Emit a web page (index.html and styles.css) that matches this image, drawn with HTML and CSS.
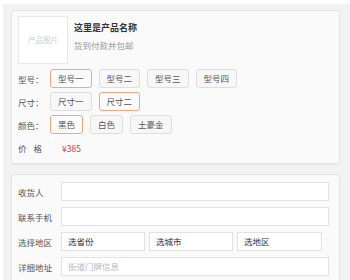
FILE: index.html
```html
<!DOCTYPE html>
<html lang="zh">
<head>
    <meta charset="UTF-8">
    <meta name="viewport" content="width=device-width, initial-scale=1.0">
    <title>商品下单</title>
    <link rel="stylesheet" href="styles.css">
</head>
<body>
    <div class="page">
        <div class="card product">
            <div class="goods">
                <div class="goods-pic">产品图片</div>
                <div class="goods-info">
                    <div class="goods-name">这里是产品名称</div>
                    <div class="goods-desc">货到付款并包邮</div>
                </div>
            </div>

            <div class="spec">
                <span class="spec-label">型号：</span>
                <span class="opt active">型号一</span>
                <span class="opt">型号二</span>
                <span class="opt">型号三</span>
                <span class="opt">型号四</span>
            </div>
            <div class="spec">
                <span class="spec-label">尺寸：</span>
                <span class="opt">尺寸一</span>
                <span class="opt active">尺寸二</span>
            </div>
            <div class="spec">
                <span class="spec-label">颜色：</span>
                <span class="opt active">黑色</span>
                <span class="opt">白色</span>
                <span class="opt">土豪金</span>
            </div>
            <div class="price-row">
                <span class="price-label">价格</span>
                <span class="price">¥385</span>
            </div>
        </div>

        <div class="card address">
            <div class="field">
                <label class="field-label">收货人</label>
                <div class="input"></div>
            </div>
            <div class="field">
                <label class="field-label">联系手机</label>
                <div class="input"></div>
            </div>
            <div class="field">
                <label class="field-label">选择地区</label>
                <div class="selects">
                    <div class="input select">选省份</div>
                    <div class="input select">选城市</div>
                    <div class="input select">选地区</div>
                </div>
            </div>
            <div class="field">
                <label class="field-label">详细地址</label>
                <div class="input placeholder">街道门牌信息</div>
            </div>
        </div>
    </div>
</body>
</html>
```

FILE: styles.css
```css
* {
    box-sizing: border-box;
}

body {
    margin: 0;
    background: #fff;
    font-family: "Noto Sans CJK SC", "Noto Sans", sans-serif;
    font-size: 8.5px;
    line-height: 12px;
    color: #555;
    overflow: hidden;
}

.page {
    margin: 4px 0 0 3px;
    padding: 6px 10px 20px 8px;
    background: #f2f2f2;
}

.card {
    background: #fafafa;
    border: 1px solid #e4e4e4;
    border-radius: 3px;
    box-shadow: 0 1px 1px rgba(0, 0, 0, 0.04);
}

.product {
    padding: 5px 6px 8px;
}

.goods {
    display: flex;
    gap: 6px;
}

.goods-pic {
    width: 50px;
    height: 48px;
    border: 1px solid #e8e8e8;
    background: #fff;
    color: #ccc;
    font-size: 7.5px;
    display: flex;
    align-items: center;
    justify-content: center;
}

.goods-name {
    margin-top: 6px;
    font-size: 9px;
    font-weight: bold;
    color: #333;
}

.goods-desc {
    margin-top: 5px;
    color: #999;
}

.spec {
    display: flex;
    align-items: center;
    gap: 7px;
    margin-top: 4px;
}

.goods + .spec {
    margin-top: 5px;
}

.spec-label {
    flex: none;
    width: 25px;
    white-space: nowrap;
    color: #555;
}

.opt {
    flex: none;
    height: 19px;
    line-height: 17px;
    padding: 0 7px;
    border: 1px solid #dedede;
    border-radius: 3px;
    background: #f7f7f7;
    color: #555;
    white-space: nowrap;
}

.opt.active {
    border-color: #f3a684;
    background: #fbfbfb;
}

.price-row {
    display: flex;
    align-items: center;
    margin-top: 7px;
    line-height: 14px;
}

.price-label {
    width: 44px;
    letter-spacing: 7px;
    color: #555;
}

.price {
    color: #e4393c;
}

.address {
    margin-top: 10px;
    padding: 7px 10px 10px 6px;
}

.field {
    display: flex;
    align-items: center;
    height: 19px;
    margin-bottom: 6px;
}

.field-label {
    flex: none;
    width: 43px;
    white-space: nowrap;
    color: #555;
}

.input {
    flex: 1;
    height: 19px;
    line-height: 17px;
    padding: 0 6px;
    border: 1px solid #e2e2e2;
    background: #fff;
    color: #333;
}

.selects {
    display: grid;
    grid-template-columns: 84px 84px 85px;
    gap: 4px;
}

.placeholder {
    color: #bbb;
}
```
